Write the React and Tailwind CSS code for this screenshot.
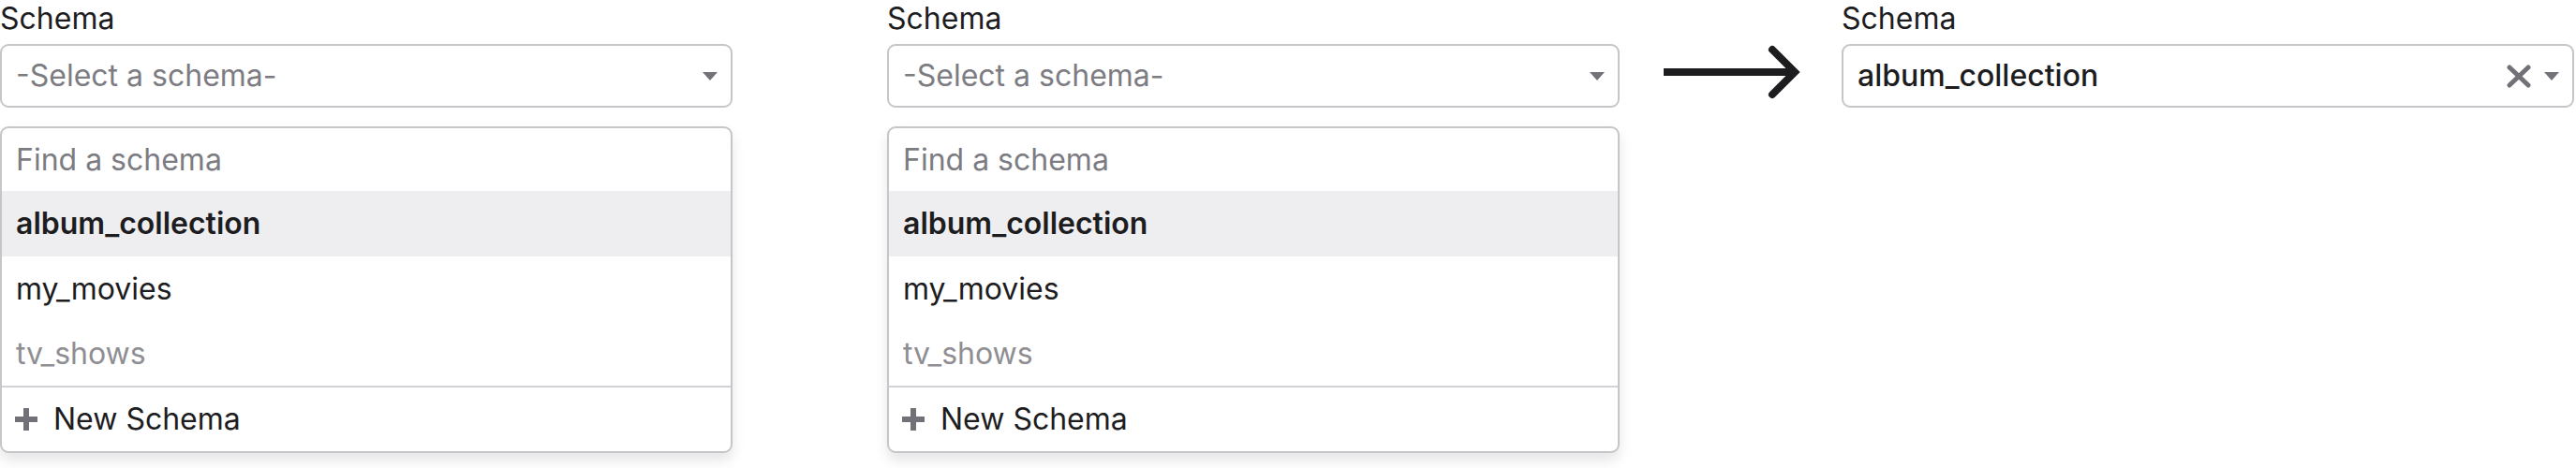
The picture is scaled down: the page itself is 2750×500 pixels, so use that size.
function Caret() {
  return (
    <svg width="16" height="9" viewBox="0 0 16 9" className="shrink-0">
      <path d="M0 0H16L8 9Z" fill="#727278" />
    </svg>
  );
}

function ClearIcon() {
  return (
    <svg width="26" height="25" viewBox="0 0 26 25" className="shrink-0">
      <path d="M3 3L23 22M23 3L3 22" stroke="#717177" strokeWidth="5" strokeLinecap="round" />
    </svg>
  );
}

function PlusIcon() {
  return (
    <svg width="24" height="24" viewBox="0 0 24 24" className="shrink-0">
      <path d="M12 1V23M1 12H23" stroke="#717177" strokeWidth="6" strokeLinecap="round" />
    </svg>
  );
}

function Arrow() {
  return (
    <svg width="148" height="60" viewBox="0 0 148 60">
      <path d="M2 30H140" stroke="#1d1d1f" strokeWidth="8" />
      <path d="M118 6L142 30L118 54" fill="none" stroke="#1d1d1f" strokeWidth="8" strokeLinecap="round" strokeLinejoin="miter" />
    </svg>
  );
}

function Label() {
  return <div className="h-[40px] leading-[40px] text-[#1d1d1f]">Schema</div>;
}

function SelectBox({ value }) {
  return (
    <div className="mt-[7px] h-[68px] border-2 border-[#c5c5ca] rounded-[9px] bg-white flex items-center pl-[15px] pr-[14px]">
      {value ? (
        <span className="flex-1 font-medium text-[#1d1d1f]">{value}</span>
      ) : (
        <span className="flex-1 text-[#7c7c82]">-Select a schema-</span>
      )}
      {value && (
        <span className="mr-[14px] flex">
          <ClearIcon />
        </span>
      )}
      <Caret />
    </div>
  );
}

function Menu() {
  return (
    <div className="mt-[20px] border-2 border-[#c5c5ca] rounded-[9px] bg-white shadow-[0_8px_14px_rgba(0,0,0,0.10)] overflow-hidden">
      <div className="h-[67px] flex items-center pl-[15px] text-[#7c7c82]">Find a schema</div>
      <div className="h-[70px] flex items-center pl-[15px] bg-[#eeeef0] font-semibold text-[#1d1d1f]">album_collection</div>
      <div className="h-[70px] flex items-center pl-[15px] text-[#1d1d1f]">my_movies</div>
      <div className="h-[68px] flex items-center pl-[15px] text-[#8e8e93]">tv_shows</div>
      <div className="h-[70px] border-t-2 border-[#d2d2d6] flex items-center pl-[14px] text-[#1d1d1f]">
        <PlusIcon />
        <span className="ml-[17px]">New Schema</span>
      </div>
    </div>
  );
}

export default function App() {
  return (
    <div className="w-[2750px] h-[500px] bg-white flex items-start text-[32px] font-['Inter',sans-serif]">
      <div className="w-[782px] shrink-0">
        <Label />
        <SelectBox />
        <Menu />
      </div>
      <div className="w-[782px] shrink-0 ml-[165px]">
        <Label />
        <SelectBox />
        <Menu />
      </div>
      <div className="w-[237px] shrink-0 flex justify-center pt-[47px]">
        <Arrow />
      </div>
      <div className="w-[782px] shrink-0">
        <Label />
        <SelectBox value="album_collection" />
      </div>
    </div>
  );
}
